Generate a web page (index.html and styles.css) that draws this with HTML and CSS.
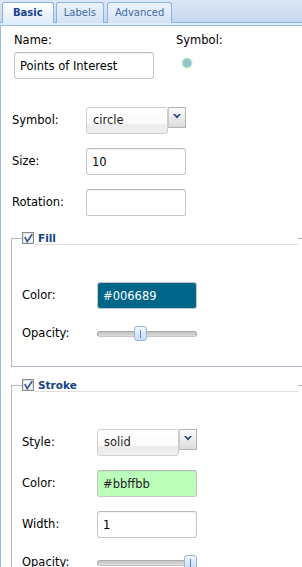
FILE: index.html
```html
<!DOCTYPE html>
<html>
<head>
<meta charset="utf-8">
<link rel="stylesheet" href="styles.css">
</head>
<body>
<div class="panel">
  <div class="tabstrip">
    <div class="tab active">Basic</div>
    <div class="tab">Labels</div>
    <div class="tab">Advanced</div>
  </div>
  <div class="band"></div>
  <div class="body">
    <div class="top">
      <div class="name-col">
        <div class="lbl">Name:</div>
        <input class="field name-field" type="text" value="Points of Interest">
      </div>
      <div class="sym-col">
        <div class="lbl">Symbol:</div>
        <svg class="preview" width="12" height="12" viewBox="0 0 12 12"><circle cx="6" cy="6" r="5" fill="#006689" fill-opacity="0.4" stroke="#bbffbb" stroke-width="1"/></svg>
      </div>
    </div>

    <div class="form">
      <div class="row">
        <div class="lbl rl">Symbol:</div>
        <div class="combo">
          <div class="combo-box">circle</div>
          <div class="combo-btn"><svg width="8" height="5" viewBox="0 0 8 5"><polygon points="0,0 2,0 4,2 6,0 8,0 4,4.5" fill="#1f3f7c"/></svg></div>
        </div>
      </div>
      <div class="row">
        <div class="lbl rl">Size:</div>
        <input class="field" type="text" value="10">
      </div>
      <div class="row">
        <div class="lbl rl">Rotation:</div>
        <input class="field" type="text" value="">
      </div>
    </div>

    <div class="fs fs-fill">
      <div class="fs-head">
        <div class="seg seg-l"></div>
        <svg class="chk" width="12" height="12" viewBox="0 0 12 12"><rect x="0.5" y="0.5" width="11" height="11" fill="#f3f3f3" stroke="#8a8a8a"/><rect x="1.5" y="1.5" width="9" height="9" fill="#fcfcfc" stroke="#e2e2e2"/><path d="M2.8 5 L5.2 9.6 L10.2 2.2" fill="none" stroke="#3a5aa8" stroke-width="1.7"/></svg>
        <div class="legend">Fill</div>
        <div class="seg seg-r"></div>
      </div>
      <div class="fs-body">
        <div class="row">
          <div class="lbl fl">Color:</div>
          <input class="field color-fill" type="text" value="#006689">
        </div>
        <div class="row slider-row">
          <div class="lbl fl">Opacity:</div>
          <div class="slider">
            <div class="track"></div>
            <div class="thumb" style="left:37px"><div class="grip"></div></div>
          </div>
        </div>
      </div>
    </div>

    <div class="fs fs-stroke">
      <div class="fs-head">
        <div class="seg seg-l"></div>
        <svg class="chk" width="12" height="12" viewBox="0 0 12 12"><rect x="0.5" y="0.5" width="11" height="11" fill="#f3f3f3" stroke="#8a8a8a"/><rect x="1.5" y="1.5" width="9" height="9" fill="#fcfcfc" stroke="#e2e2e2"/><path d="M2.8 5 L5.2 9.6 L10.2 2.2" fill="none" stroke="#3a5aa8" stroke-width="1.7"/></svg>
        <div class="legend">Stroke</div>
        <div class="seg seg-r"></div>
      </div>
      <div class="fs-body">
        <div class="row">
          <div class="lbl fl">Style:</div>
          <div class="combo">
            <div class="combo-box">solid</div>
            <div class="combo-btn"><svg width="8" height="5" viewBox="0 0 8 5"><polygon points="0,0 2,0 4,2 6,0 8,0 4,4.5" fill="#1f3f7c"/></svg></div>
          </div>
        </div>
        <div class="row">
          <div class="lbl fl">Color:</div>
          <input class="field color-stroke" type="text" value="#bbffbb">
        </div>
        <div class="row">
          <div class="lbl fl">Width:</div>
          <input class="field" type="text" value="1">
        </div>
        <div class="row slider-row">
          <div class="lbl fl">Opacity:</div>
          <div class="slider">
            <div class="track"></div>
            <div class="thumb" style="left:87px"><div class="grip"></div></div>
          </div>
        </div>
      </div>
    </div>
  </div>
</div>
</body>
</html>
```
FILE: styles.css
```css
html, body {
  margin: 0;
  padding: 0;
  overflow: hidden;
  background: #fff;
}
body {
  font-family: "DejaVu Sans", sans-serif;
  font-size: 11.5px;
  color: #000;
  width: 302px;
  height: 567px;
}
.panel {
  width: 302px;
}
.tabstrip {
  height: 22px;
  display: flex;
  align-items: flex-end;
  padding-left: 2px;
  background: linear-gradient(#dce7f6, #c6d7ee);
  border-bottom: 1px solid #8db2e3;
}
.tab {
  box-sizing: border-box;
  height: 21px;
  padding: 0 7px;
  line-height: 19px;
  font-size: 10px;
  color: #416aa3;
  border: 1px solid #8db2e3;
  border-bottom: none;
  border-radius: 3px 3px 0 0;
  background: linear-gradient(#edf3fb, #d4e2f4);
  margin-right: 3px;
  margin-bottom: -1px;
}
.tab.active {
  padding: 0 10px;
  margin-right: 2px;
  font-weight: bold;
  color: #15428b;
  background: linear-gradient(#ffffff, #e6eefa 80%, #deecfd);
}
.band {
  height: 2px;
  background: #deecfd;
  border-bottom: 1px solid #99bbe8;
}
.body {
  border-left: 1px solid #99bbe8;
  padding: 8px 0 0 10px;
  height: 600px;
}
.lbl {
  line-height: 13px;
  white-space: nowrap;
}
.top {
  display: flex;
  padding-left: 3px;
}
.name-col {
  width: 140px;
  display: flex;
  flex-direction: column;
}
.sym-col {
  margin-left: 22px;
  display: flex;
  flex-direction: column;
}
.preview {
  margin: 10px 0 0 5px;
  display: block;
}
.field {
  box-sizing: border-box;
  height: 27px;
  width: 100px;
  border: 1px solid #c6c6c6;
  border-top-color: #b9b9b9;
  border-radius: 3px;
  padding: 0 5px;
  margin: 0;
  font-family: "DejaVu Sans", sans-serif;
  font-size: 11.5px;
  color: #000;
  background: #fff;
  box-shadow: inset 0 1px 1px rgba(0, 0, 0, 0.05);
  outline: none;
}
.name-field {
  width: 140px;
  margin-top: 5px;
}
.form {
  margin-top: 28px;
  padding-left: 1px;
  display: flex;
  flex-direction: column;
  gap: 14px;
}
.row {
  display: flex;
  align-items: center;
  height: 27px;
}
.rl {
  width: 74px;
}
.fl {
  width: 75px;
}
.combo {
  display: flex;
  align-items: flex-start;
  height: 27px;
}
.combo-box {
  box-sizing: border-box;
  width: 82px;
  height: 27px;
  border: 1px solid #cfcfcf;
  border-radius: 3px;
  padding: 0 6px;
  line-height: 25px;
  color: #222;
  background: linear-gradient(#ffffff 0, #fafafa 64%, #ececec 64%, #efefef 100%);
}
.combo-btn {
  box-sizing: border-box;
  width: 18px;
  height: 21px;
  border: 1px solid #b3b3b3;
  border-left-color: #c9c9c9;
  background: linear-gradient(#fbfbfb, #dcdcdc);
  display: flex;
  align-items: center;
  justify-content: center;
  padding-bottom: 3px;
}
.combo-btn svg {
  display: block;
}
.fs {
  width: 300px;
}
.fs-fill {
  margin-top: 16px;
}
.fs-stroke {
  margin-top: 12px;
}
.fs-head {
  display: flex;
  align-items: flex-end;
  height: 13px;
}
.seg {
  box-sizing: border-box;
  height: 7px;
  border-top: 1px solid #b5b8c8;
}
.seg-l {
  width: 11px;
  border-left: 1px solid #b5b8c8;
}
.seg-r {
  width: 13px;
  border-top-color: #a9adc8;
}
.chk {
  display: block;
  margin-bottom: 1px;
  flex: none;
}
.legend {
  flex: 1;
  box-sizing: border-box;
  height: 13px;
  line-height: 12px;
  margin-left: 1px;
  padding-left: 3px;
  font-size: 10.5px;
  font-weight: bold;
  color: #15428b;
  border-bottom: 1px solid #dedede;
}
.fs-body {
  border-left: 1px solid #b5b8c8;
  border-bottom: 1px solid #b5b8c8;
  padding: 37px 0 19px 10px;
  display: flex;
  flex-direction: column;
  gap: 14px;
}
.slider-row {
  margin-top: -3px;
}
.slider {
  position: relative;
  width: 100px;
  height: 27px;
  display: flex;
  align-items: center;
}
.track {
  box-sizing: border-box;
  width: 100px;
  height: 6px;
  border-radius: 3px;
  border: 1px solid #a9a9a9;
  border-bottom-color: #c4c4c4;
  background: linear-gradient(#c4c4c4, #dcdcdc);
}
.thumb {
  position: absolute;
  top: 6px;
  box-sizing: border-box;
  width: 13px;
  height: 15px;
  border: 1px solid #95b5e2;
  border-radius: 3px;
  background: linear-gradient(#f2f7fe, #c9dbf5);
  display: flex;
  justify-content: center;
  align-items: center;
}
.grip {
  width: 1px;
  height: 8px;
  background: #5585cf;
}
.color-fill {
  background: #006689;
  color: #fff;
  border-color: #c6c6c6;
}
.color-stroke {
  background: #bbffbb;
  color: #222;
}
```
